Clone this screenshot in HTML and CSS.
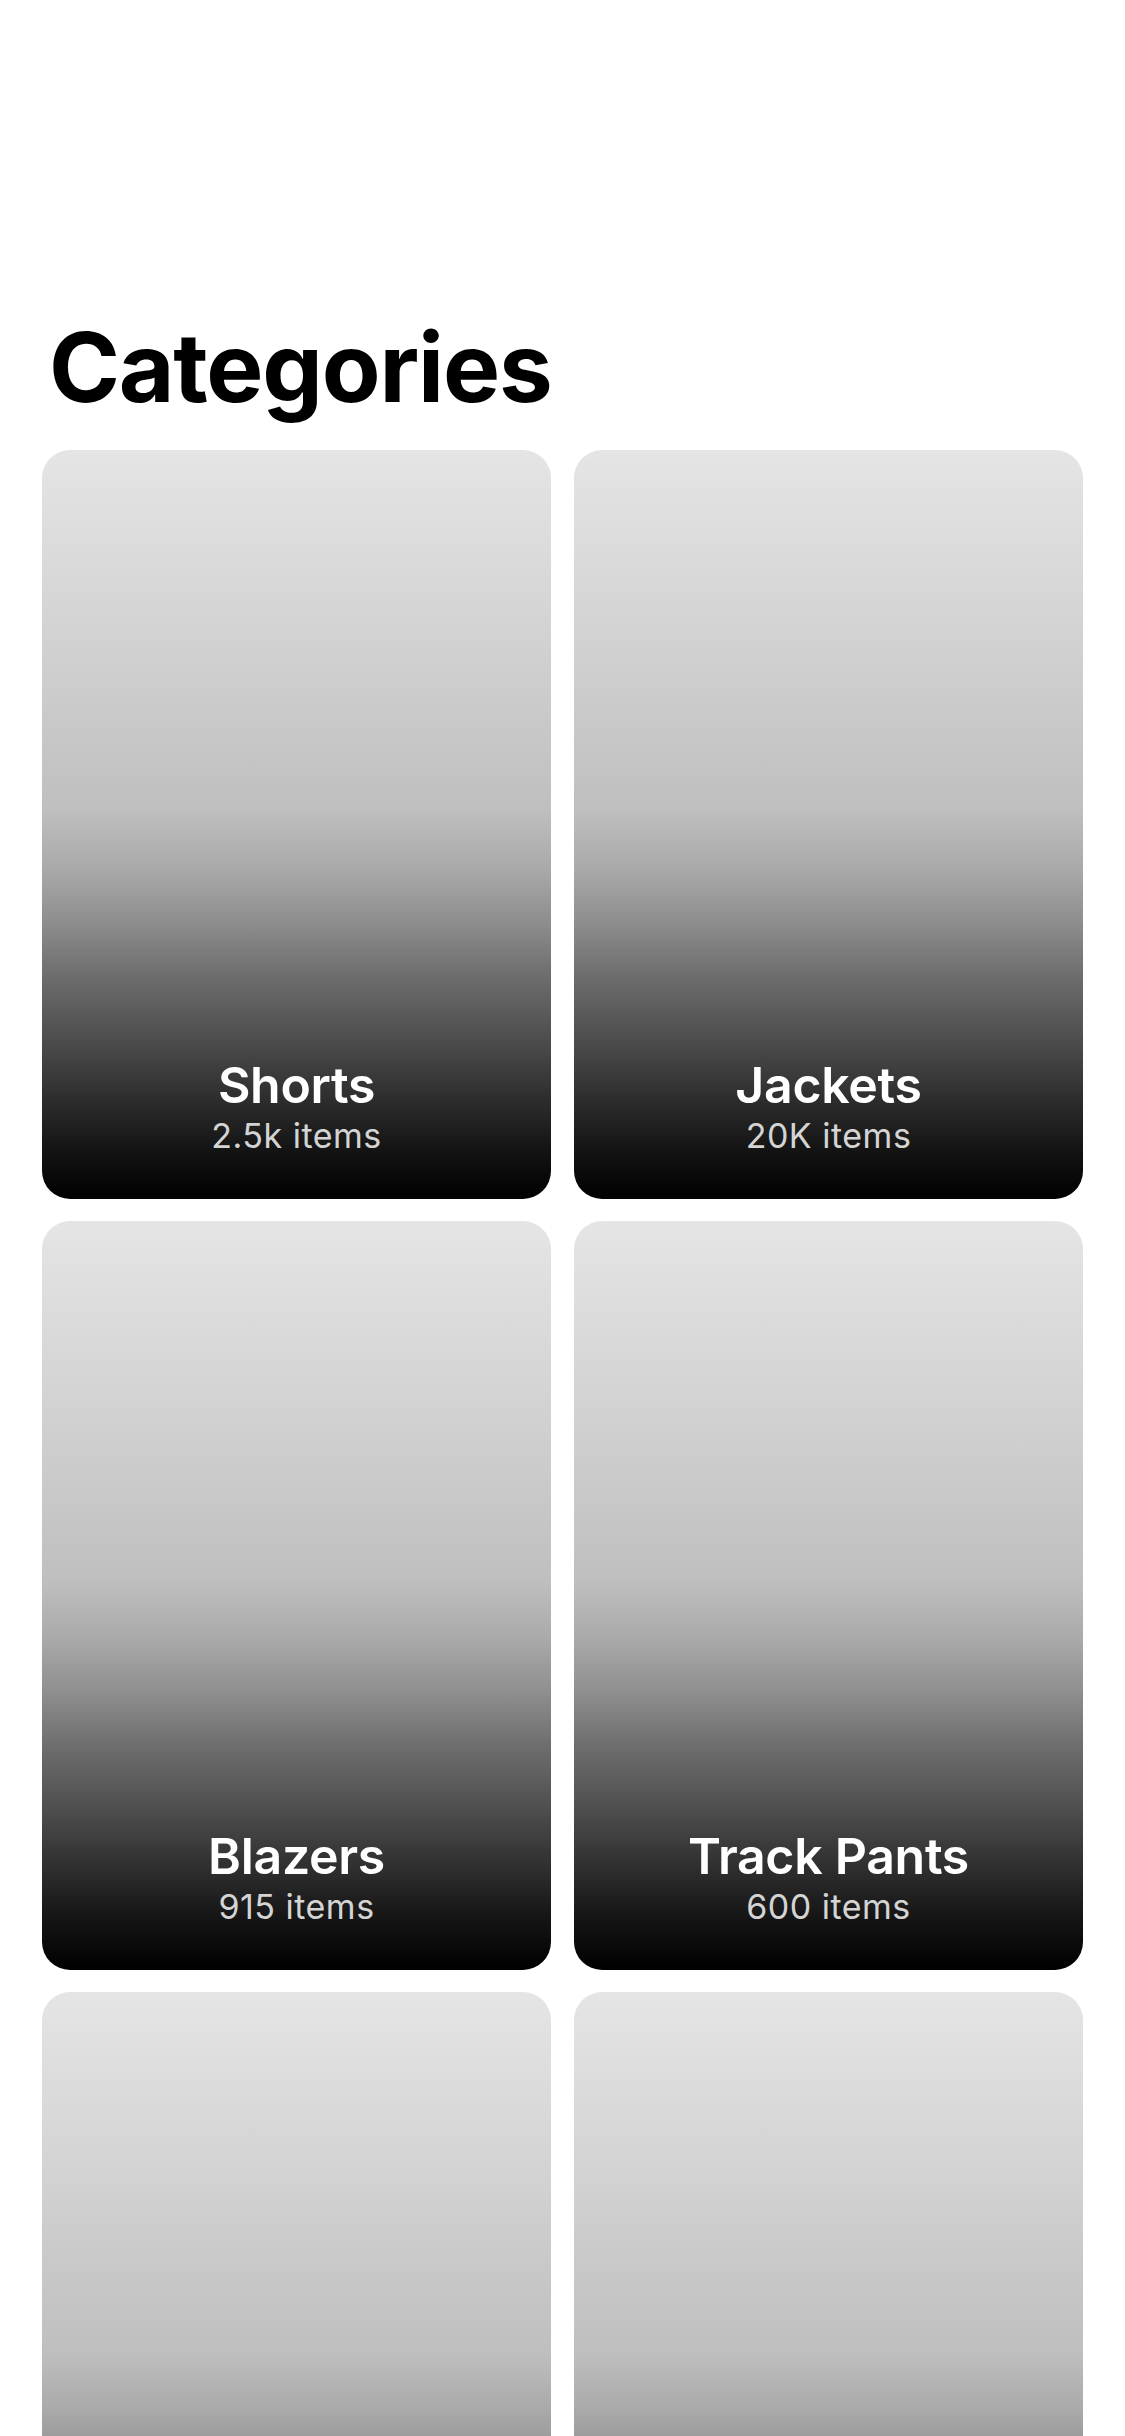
FILE: index.html
```html
<!DOCTYPE html>
<html lang="en">
<head>
<meta charset="utf-8">
<title>Categories</title>
<link rel="stylesheet" href="styles.css">
</head>
<body>
<main class="page">
  <h1 class="title">Categories</h1>
  <section class="grid">
    <article class="card">
      <h2 class="card-name">Shorts</h2>
      <p class="card-count">2.5k items</p>
    </article>
    <article class="card">
      <h2 class="card-name">Jackets</h2>
      <p class="card-count">20K items</p>
    </article>
    <article class="card">
      <h2 class="card-name">Blazers</h2>
      <p class="card-count">915 items</p>
    </article>
    <article class="card">
      <h2 class="card-name">Track Pants</h2>
      <p class="card-count">600 items</p>
    </article>
    <article class="card">
      <h2 class="card-name">&nbsp;</h2>
      <p class="card-count">&nbsp;</p>
    </article>
    <article class="card">
      <h2 class="card-name">&nbsp;</h2>
      <p class="card-count">&nbsp;</p>
    </article>
  </section>
</main>
</body>
</html>
```

FILE: styles.css
```css
html, body {
  margin: 0;
  padding: 0;
  background: #ffffff;
  overflow: hidden;
}

body {
  font-family: Inter, "Noto Sans", "Liberation Sans", sans-serif;
  width: 1125px;
  height: 2436px;
}

.page {
  height: 2436px;
  overflow: hidden;
  box-sizing: border-box;
  padding: 309px 42px 0 42px;
}

.title {
  margin: 0 0 25px 7px;
  font-size: 96px;
  line-height: 116px;
  font-weight: 700;
  letter-spacing: -1.2px;
  color: #000;
}

.grid {
  display: grid;
  grid-template-columns: 509px 509px;
  column-gap: 23px;
  row-gap: 22px;
}

.card {
  height: 749px;
  border-radius: 28px;
  display: flex;
  flex-direction: column;
  justify-content: flex-end;
  align-items: center;
  padding-bottom: 43px;
  box-sizing: border-box;
  background: linear-gradient(to bottom,
    #e5e5e5 0%,
    #d2d2d2 25%,
    #bfbfbf 48%,
    #a9a9a9 56%,
    #8e8e8e 63%,
    #6e6e6e 70%,
    #505050 78%,
    #303030 86%,
    #151515 93%,
    #000000 100%);
}

.card-name {
  margin: 0;
  font-size: 50px;
  line-height: 60px;
  font-weight: 600;
  color: #ffffff;
  letter-spacing: -0.3px;
}

.card-count {
  margin: 0;
  font-size: 34px;
  line-height: 41px;
  font-weight: 400;
  letter-spacing: 0.5px;
  color: #d4d4d4;
}
```
